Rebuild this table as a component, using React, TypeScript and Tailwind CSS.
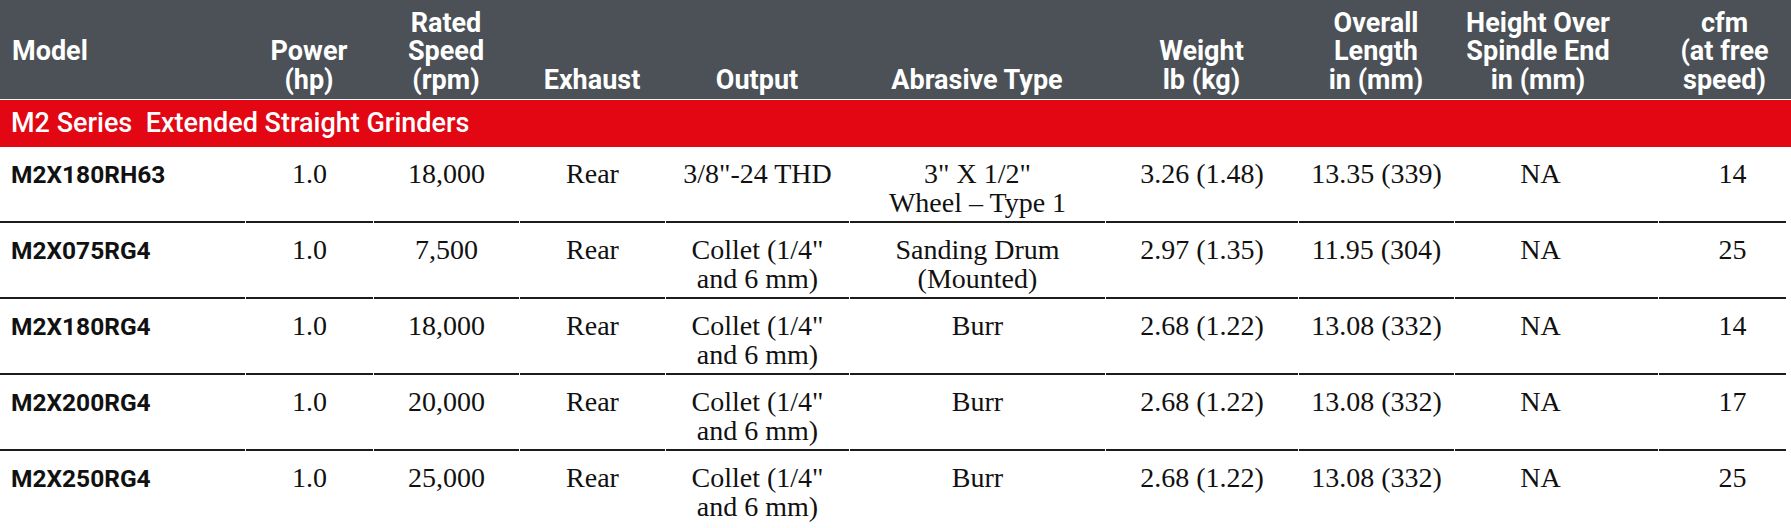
import React from 'react'

const cols = 'grid grid-cols-[245px_128px_146px_146px_184px_256px_193px_156px_204px_133px]'
const bodyCols = 'grid grid-cols-[245px_127px_145px_145px_183px_255px_192px_155px_203px_127px] gap-x-px'

const headers = [
  { lines: ['Power', '(hp)'] },
  { lines: ['Rated', 'Speed', '(rpm)'] },
  { lines: ['Exhaust'] },
  { lines: ['Output'] },
  { lines: ['Abrasive Type'] },
  { lines: ['Weight', 'lb (kg)'] },
  { lines: ['Overall', 'Length', 'in (mm)'] },
  { lines: ['Height Over', 'Spindle End', 'in (mm)'], pad: 'pr-[36px]' },
  { lines: ['cfm', '(at free', 'speed)'] },
]

const rows = [
  ['M2X180RH63', '1.0', '18,000', 'Rear', ['3/8"-24 THD'], ['3" X 1/2"', 'Wheel – Type 1'], '3.26 (1.48)', '13.35 (339)', 'NA', '14'],
  ['M2X075RG4', '1.0', '7,500', 'Rear', ['Collet (1/4"', 'and 6 mm)'], ['Sanding Drum', '(Mounted)'], '2.97 (1.35)', '11.95 (304)', 'NA', '25'],
  ['M2X180RG4', '1.0', '18,000', 'Rear', ['Collet (1/4"', 'and 6 mm)'], ['Burr'], '2.68 (1.22)', '13.08 (332)', 'NA', '14'],
  ['M2X200RG4', '1.0', '20,000', 'Rear', ['Collet (1/4"', 'and 6 mm)'], ['Burr'], '2.68 (1.22)', '13.08 (332)', 'NA', '17'],
  ['M2X250RG4', '1.0', '25,000', 'Rear', ['Collet (1/4"', 'and 6 mm)'], ['Burr'], '2.68 (1.22)', '13.08 (332)', 'NA', '25'],
] as const

const sans = "font-['Roboto','Liberation_Sans',sans-serif]"
const serif = "font-['Liberation_Serif','DejaVu_Serif',serif]"

export default function App() {
  return (
    <div className="w-[1791px] h-[528px] bg-white overflow-hidden">
      <div className={`${cols} ${sans} h-[99px] bg-[#4b5156] text-white font-bold text-[27px] leading-[28.5px]`}>
        <div className="flex items-center pl-[12px] pt-[4px]">Model</div>
        {headers.map((h, i) => (
          <div key={i} className={`flex flex-col items-center justify-end text-center pb-[5px] ${h.pad ?? ''}`}>
            {h.lines.map((l) => (
              <span key={l} className="whitespace-nowrap">{l}</span>
            ))}
          </div>
        ))}
      </div>
      <div className="h-px bg-white" />
      <div className={`${sans} h-[47px] bg-[#e30613] text-white text-[27px] font-medium flex items-center pl-[11px] whitespace-pre`}>
        {'M2 Series  Extended Straight Grinders'}
      </div>

      {rows.map((r, ri) => (
        <div key={ri} className={`${bodyCols} h-[76px]`}>
          {r.map((cell, ci) => {
            const border = ri < rows.length - 1 ? 'border-b-2 border-[#1d1d1b]' : ''
            if (ci === 0) {
              return (
                <div key={ci} className={`${sans} ${border} font-bold text-[24.5px] leading-[29px] pl-[11px] pt-[13px] text-[#111]`}>
                  {cell as string}
                </div>
              )
            }
            const lines = Array.isArray(cell) ? cell : [cell as string]
            return (
              <div
                key={ci}
                className={`${serif} ${border} flex flex-col items-center text-center text-[28px] leading-[29px] pt-[12px] text-[#111] ${ci === 8 ? 'pr-[32px]' : ''} ${ci === 9 ? 'pl-[20px]' : ''}`}
              >
                {lines.map((l) => (
                  <span key={l} className="whitespace-nowrap">{l}</span>
                ))}
              </div>
            )
          })}
        </div>
      ))}
    </div>
  )
}
